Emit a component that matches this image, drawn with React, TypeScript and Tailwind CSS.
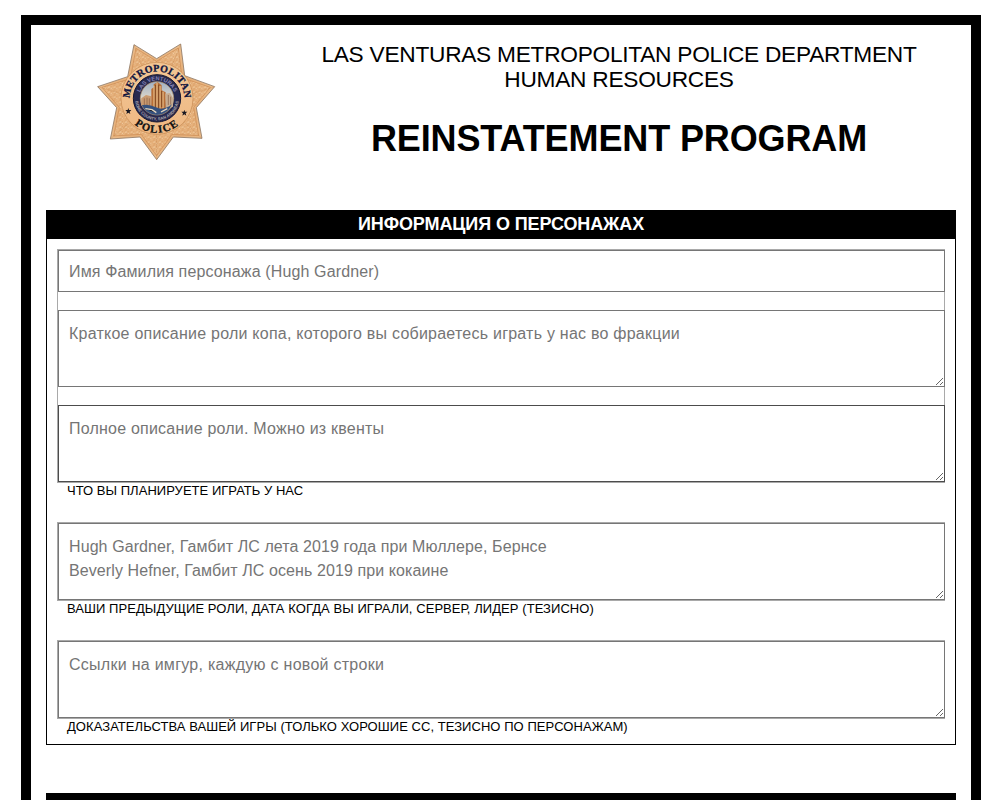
import React from "react";

function Badge() {
  return (
    <svg viewBox="0 0 405 390" className="h-[130px] w-[135px]" aria-label="Metropolitan Police">
      <defs>
        <radialGradient id="gold" cx="50%" cy="50%" r="55%">
          <stop offset="0" stopColor="#f3c591" />
          <stop offset="0.65" stopColor="#e6b07a" />
          <stop offset="1" stopColor="#edc08f" />
        </radialGradient>
        <linearGradient id="disc" x1="0" y1="0" x2="0" y2="1">
          <stop offset="0" stopColor="#f3c694" />
          <stop offset="1" stopColor="#eeb883" />
        </linearGradient>
        <linearGradient id="sky" x1="0" y1="0" x2="0" y2="1">
          <stop offset="0" stopColor="#9fb0c4" />
          <stop offset="0.5" stopColor="#dcd6cb" />
          <stop offset="1" stopColor="#4f6b94" />
        </linearGradient>
        <path id="arcTop" d="M120 204A82 82 0 1 1 282 204" />
        <path id="arcBottom" d="M98 190A103 103 0 0 0 304 190" />
        <path id="ringTop" d="M147 190A54 54 0 0 1 255 190" />
        <path id="ringBottom" d="M135 190A66 66 0 0 0 267 190" />
        <pattern id="grain" width="17" height="15" patternUnits="userSpaceOnUse">
          <path d="M1 4q4-5 7 0t6-1M3 12q5 3 6-3M12 14l4-5" fill="none" stroke="#b9753b" strokeWidth="1.5" opacity=".5" />
          <path d="M4 7l5-2M11 10l4 2" stroke="#fbe6c8" strokeWidth="1.8" opacity=".9" />
        </pattern>
      </defs>
      <path
        d="M132 29L200 71L272 27L284 122L374 155L319 218L336 310L250 306L200 374L150 306L61 312L80 218L23 155L113 125Z"
        fill="url(#gold)"
        stroke="#8f7a66"
        strokeWidth="2.5"
        strokeLinejoin="round"
      />
      <path
        d="M138 40L200 79L265 39L276 128L361 157L311 217L326 302L246 298L200 362L154 298L71 303L88 217L36 157L121 131Z"
        fill="url(#grain)"
        stroke="#cc8a50"
        strokeWidth="2"
      />
      <g stroke="#b8763e" strokeWidth="1.5" opacity=".45">
        <path d="M132 29L158 98M272 27L244 98M374 155L300 178M336 310L280 260M200 374V295M61 312L122 260M23 155L102 178" />
      </g>
      <circle cx="201" cy="190" r="108" fill="url(#disc)" stroke="#c58a52" strokeWidth="2" />
      <circle cx="201" cy="190" r="71" fill="#27294f" stroke="#151631" strokeWidth="3" />
      <circle cx="201" cy="190" r="50" fill="url(#sky)" stroke="#b99a70" strokeWidth="2" />
      <path d="M154 190l14-10 16 4v34l-20 6-11-14z" fill="#c99a70" />
      <path d="M184 224v-62l7-5v-9l12-7 12 10v15l12 6v53z" fill="#b96f37" />
      <path d="M192 152v72M201 143v82M210 153v72M219 170v50" stroke="#efcf9d" strokeWidth="3" />
      <path d="M196 150v70M206 149v70M215 168v48" stroke="#653518" strokeWidth="2" />
      <path d="M226 176l14-2 9 15v26l-20 9z" fill="#c8ad91" />
      <path d="M163 190v26M171 188v28M178 190v28M235 180v30M242 185v24" stroke="#835a44" strokeWidth="2" />
      <path d="M155 211q20-5 43 6t48-9q-14 31-45 31t-46-28z" fill="#35517e" />
      <path d="M166 221l20 3 13 9M213 231l19-10" stroke="#e4d7c1" strokeWidth="4" />
      <g fontFamily="'Liberation Serif', serif" fontWeight="700" strokeWidth="0.9">
        <text fontSize="30" fill="#10143d" stroke="#10143d" textAnchor="middle" letterSpacing="0.5">
          <textPath href="#arcTop" startOffset="50%">METROPOLITAN</textPath>
        </text>
        <text fontSize="32" fill="#111" stroke="#111" textAnchor="middle" letterSpacing="4">
          <textPath href="#arcBottom" startOffset="50%">POLICE</textPath>
        </text>
      </g>
      <g fontFamily="'Liberation Sans', sans-serif" fontWeight="700">
        <text fontSize="17" fill="#8582b5" textAnchor="middle">
          <textPath href="#ringTop" startOffset="50%">LAS VENTURAS</textPath>
        </text>
        <text fontSize="12.5" fill="#aaa5ac" textAnchor="middle">
          <textPath href="#ringBottom" startOffset="50%">BONE COUNTY, SAN ANDREAS</textPath>
        </text>
      </g>
      <path d="M115 219l2 6h7l-5 5 2 7-6-4-6 4 2-7-5-5h7zM283 224l2 6h7l-5 5 2 7-6-4-6 4 2-7-5-5h7z" fill="#171722" />
    </svg>
  );
}

const fieldBase =
  "block w-full resize border bg-white text-[16px] leading-[24px] text-[#757575] outline-none placeholder:text-[#757575] placeholder:opacity-100 rounded-none";

type AreaProps = { placeholder: string; tone?: string; spacing: string };

function Area({ placeholder, tone = "border-[#767676]", spacing }: AreaProps) {
  return (
    <textarea
      placeholder={placeholder}
      className={`${fieldBase} h-[77px] overflow-hidden px-[10px] py-[11px] ${tone} ${spacing}`}
    />
  );
}

function Caption({ children, spacing }: { children: React.ReactNode; spacing: string }) {
  return (
    <div className={`h-[39px] whitespace-nowrap pl-[10px] text-[13px] leading-[15px] ${spacing}`}>{children}</div>
  );
}

export default function App() {
  return (
    <div className="h-[800px] overflow-hidden bg-white pl-[21px] pt-[15px] font-['Liberation_Sans',Arial,sans-serif] text-black">
      <main className="h-[1000px] w-[960px] border-[10px] border-black px-[15px]">
        <header className="flex h-[185px]">
          <div className="w-[236px] pl-[44px] pt-[10px]">
            <Badge />
          </div>
          <div className="flex-1 whitespace-nowrap pt-[17px] text-center">
            <p className="text-[22.7px] leading-[25px] tracking-[-0.26px]">
              LAS VENTURAS METROPOLITAN POLICE DEPARTMENT
              <br />
              HUMAN RESOURCES
            </p>
            <h1 className="mt-[26px] text-[36px] font-bold leading-[42px] tracking-[-0.12px]">REINSTATEMENT PROGRAM</h1>
          </div>
        </header>

        <section className="h-[535px] border border-black">
          <h2 className="h-[28px] bg-black text-center text-[18px] font-bold leading-[26px] tracking-[-0.1px] text-white">
            ИНФОРМАЦИЯ О ПЕРСОНАЖАХ
          </h2>
          <div className="px-[10px] pt-[10px]">
            <div className="flex h-[234px] flex-col gap-[18px] border border-[#a9a9a9]">
              <div className="-mr-px">
                <input
                  placeholder="Имя Фамилия персонажа (Hugh Gardner)"
                  className={`${fieldBase} h-[42px] border-[#767676] px-[10px] pt-[2px] tracking-[0.135px]`}
                />
              </div>
              <div className="-mr-px">
                <Area
                  placeholder="Краткое описание роли копа, которого вы собираетесь играть у нас во фракции"
                  spacing="tracking-[0.235px]"
                />
              </div>
              <div className="-mr-px">
                <Area
                  placeholder="Полное описание роли. Можно из квенты"
                  tone="border-[#4c4c4c]"
                  spacing="tracking-[0.215px]"
                />
              </div>
            </div>
            <Caption spacing="tracking-[0.03px]">ЧТО ВЫ ПЛАНИРУЕТЕ ИГРАТЬ У НАС</Caption>
            <div className="h-[79px] border border-[#a9a9a9]">
              <div className="-mr-px">
                <Area
                  placeholder={"Hugh Gardner, Гамбит ЛС лета 2019 года при Мюллере, Бернсе\nBeverly Hefner, Гамбит ЛС осень 2019 при кокаине"}
                  spacing="tracking-[0.09px]"
                />
              </div>
            </div>
            <Caption spacing="tracking-[0.065px]">
              ВАШИ ПРЕДЫДУЩИЕ РОЛИ, ДАТА КОГДА ВЫ ИГРАЛИ, СЕРВЕР, ЛИДЕР (ТЕЗИСНО)
            </Caption>
            <div className="h-[79px] border border-[#a9a9a9]">
              <div className="-mr-px">
                <Area placeholder="Ссылки на имгур, каждую с новой строки" spacing="tracking-[0.27px]" />
              </div>
            </div>
            <Caption spacing="tracking-[0.055px]">
              ДОКАЗАТЕЛЬСТВА ВАШЕЙ ИГРЫ (ТОЛЬКО ХОРОШИЕ СС, ТЕЗИСНО ПО ПЕРСОНАЖАМ)
            </Caption>
          </div>
        </section>
        <div className="mt-[48px] h-[29px] bg-black" />
      </main>
    </div>
  );
}
